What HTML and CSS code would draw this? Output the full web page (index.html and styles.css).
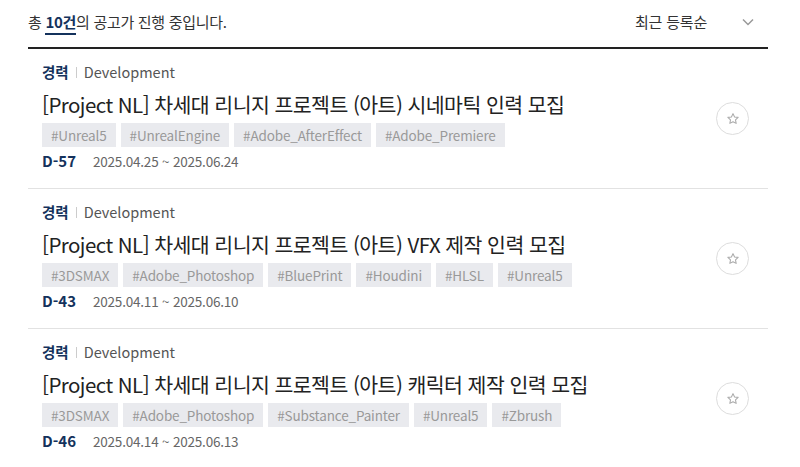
FILE: index.html
```html
<!DOCTYPE html>
<html lang="ko">
<head>
<meta charset="utf-8">
<link rel="stylesheet" href="styles.css">
</head>
<body>
<div class="wrap">
  <div class="head">
    <p class="count">총 <strong>10건</strong>의 공고가 진행 중입니다.</p>
    <div class="sort">
      <span>최근 등록순</span>
      <svg class="chev" width="12" height="8" viewBox="0 0 12 8"><path d="M1 1.5 6 6.5 11 1.5" fill="none" stroke="#999" stroke-width="1.5"/></svg>
    </div>
  </div>
  <ul class="list">
    <li class="row">
      <div class="info">
        <div class="cat"><b>경력</b><i></i><span>Development</span></div>
        <div class="title">[Project NL] 차세대 리니지 프로젝트 (아트) 시네마틱 인력 모집</div>
        <div class="tags"><span>#Unreal5</span><span>#UnrealEngine</span><span>#Adobe_AfterEffect</span><span>#Adobe_Premiere</span></div>
        <div class="date"><b>D-57</b><span>2025.04.25 ~ 2025.06.24</span></div>
      </div>
      <button class="fav"><svg width="14" height="14" viewBox="0 0 24 24"><path d="M12 2.8l2.7 5.6 6.1.8-4.5 4.2 1.1 6.1L12 16.6l-5.4 2.9 1.1-6.1-4.5-4.2 6.1-.8z" fill="none" stroke="#aaa" stroke-width="1.8" stroke-linejoin="round"/></svg></button>
    </li>
    <li class="row">
      <div class="info">
        <div class="cat"><b>경력</b><i></i><span>Development</span></div>
        <div class="title">[Project NL] 차세대 리니지 프로젝트 (아트) VFX 제작 인력 모집</div>
        <div class="tags"><span>#3DSMAX</span><span>#Adobe_Photoshop</span><span>#BluePrint</span><span>#Houdini</span><span>#HLSL</span><span>#Unreal5</span></div>
        <div class="date"><b>D-43</b><span>2025.04.11 ~ 2025.06.10</span></div>
      </div>
      <button class="fav"><svg width="14" height="14" viewBox="0 0 24 24"><path d="M12 2.8l2.7 5.6 6.1.8-4.5 4.2 1.1 6.1L12 16.6l-5.4 2.9 1.1-6.1-4.5-4.2 6.1-.8z" fill="none" stroke="#aaa" stroke-width="1.8" stroke-linejoin="round"/></svg></button>
    </li>
    <li class="row">
      <div class="info">
        <div class="cat"><b>경력</b><i></i><span>Development</span></div>
        <div class="title">[Project NL] 차세대 리니지 프로젝트 (아트) 캐릭터 제작 인력 모집</div>
        <div class="tags"><span>#3DSMAX</span><span>#Adobe_Photoshop</span><span>#Substance_Painter</span><span>#Unreal5</span><span>#Zbrush</span></div>
        <div class="date"><b>D-46</b><span>2025.04.14 ~ 2025.06.13</span></div>
      </div>
      <button class="fav"><svg width="14" height="14" viewBox="0 0 24 24"><path d="M12 2.8l2.7 5.6 6.1.8-4.5 4.2 1.1 6.1L12 16.6l-5.4 2.9 1.1-6.1-4.5-4.2 6.1-.8z" fill="none" stroke="#aaa" stroke-width="1.8" stroke-linejoin="round"/></svg></button>
    </li>
  </ul>
</div>
</body>
</html>
```
FILE: styles.css
```css
* { box-sizing: border-box; }
html, body { margin: 0; padding: 0; background: #fff; }
body { font-family: "Noto Sans CJK KR", "Noto Sans", sans-serif; color: #222; }
.wrap { width: 740px; margin-left: 28px; }
.head {
  height: 49px;
  display: flex;
  align-items: center;
  justify-content: space-between;
  border-bottom: 2px solid #222;
  padding-bottom: 4px;
}
.count { margin: 0; font-size: 15px; color: #333; letter-spacing: -0.3px; }
.count strong { color: #14325c; font-weight: 700; border-bottom: 2px solid #14325c; padding-bottom: 1px; }
.sort { display: flex; align-items: center; gap: 35px; margin-right: 14px; font-size: 15px; color: #333; letter-spacing: -0.2px; }
.chev { display: block; }
.list { list-style: none; margin: 0; padding: 0; }
.row {
  height: 140px;
  display: flex;
  align-items: center;
  justify-content: space-between;
  border-bottom: 1px solid #e2e2e2;
  padding: 0 19px 0 14px;
}
.info { display: flex; flex-direction: column; padding-bottom: 4px; }
.cat { display: flex; align-items: center; font-size: 14.5px; line-height: 20px; }
.cat b { color: #14325c; font-weight: 700; }
.cat i { width: 1px; height: 11px; background: #ccc; margin: 0 7px; }
.cat span { color: #555; }
.title { font-size: 20.5px; line-height: 32px; margin-top: 6px; color: #222; letter-spacing: -0.55px; }
.tags { display: flex; gap: 5px; margin-top: 3px; }
.tags span { background: #e9eaee; color: #999; font-size: 13.5px; line-height: 24px; height: 24px; padding: 0 9px; letter-spacing: -0.15px; }
.date { display: flex; align-items: center; gap: 17px; margin-top: 4px; line-height: 20px; }
.date b { color: #14325c; font-size: 15px; font-weight: 700; }
.date span { color: #666; font-size: 13.5px; letter-spacing: -0.2px; }
.fav {
  width: 33px; height: 33px; border-radius: 50%;
  border: 1px solid #ddd; background: #fff;
  display: flex; align-items: center; justify-content: center; padding: 0;
}
```
